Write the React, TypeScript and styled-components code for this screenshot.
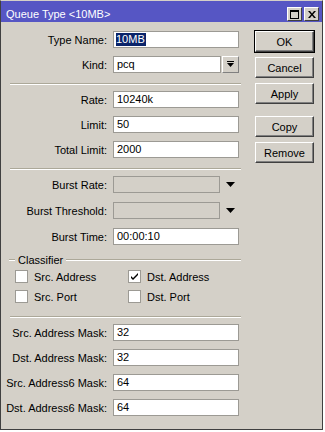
import React from "react";
import styled, { createGlobalStyle } from "styled-components";

const Global = createGlobalStyle`
  html, body { margin: 0; padding: 0; background: #ffffff; }
  body { font-family: "Liberation Sans", Arial, sans-serif; font-size: 11px; color: #000; }
  * { box-sizing: border-box; }
`;

const Window = styled.div`
  width: 323px;
  height: 430px;
  background: #d4d0c8;
  border-top: 1px solid #d4d0c8;
  border-left: 1px solid #404040;
  border-right: 1px solid #404040;
  border-bottom: 1px solid #404040;
  display: flex;
  flex-direction: column;
`;

const TitleBar = styled.div`
  height: 21px;
  background: #5656c4;
  color: #fff;
  display: flex;
  align-items: center;
  padding: 5px 3px 0 5px;
  font-size: 11px;
`;

const Title = styled.span`
  flex: 1;
`;

const TitleButtons = styled.div`
  display: flex;
  gap: 2px;
`;

const TitleButton = styled.div`
  width: 15px;
  height: 14px;
  background: #d4d0c8;
  border-top: 1px solid #fff;
  border-left: 1px solid #fff;
  border-right: 1px solid #404040;
  border-bottom: 1px solid #404040;
  display: flex;
  align-items: center;
  justify-content: center;
`;

const Body = styled.div`
  display: flex;
  padding-top: 9px;
`;

const Form = styled.div`
  width: 246px;
  display: flex;
  flex-direction: column;
`;

const Section = styled.div<{ $gap: number }>`
  display: flex;
  flex-direction: column;
  gap: ${(p) => p.$gap}px;
`;

const Row = styled.div`
  display: grid;
  grid-template-columns: 106px 126px;
  column-gap: 6px;
  align-items: center;
  height: 17px;
`;

const Label = styled.label`
  text-align: right;
  white-space: nowrap;
`;

const Field = styled.div`
  display: flex;
  align-items: center;
  gap: 1px;
  height: 17px;
`;

const Input = styled.div<{ $disabled?: boolean; $w?: number }>`
  width: ${(p) => (p.$w ? `${p.$w}px` : "100%")};
  height: 17px;
  background: ${(p) => (p.$disabled ? "#d4d0c8" : "#fff")};
  border: 1px solid #9c9a94;
  padding: 0 3px;
  display: flex;
  align-items: center;
  line-height: 13px;
  white-space: nowrap;
`;

const Selected = styled.span`
  background: #0a246a;
  color: #fff;
  padding: 0 1px 0 0;
  margin-left: -1px;
`;

const DropButton = styled.div`
  width: 17px;
  height: 17px;
  background: #d4d0c8;
  border-top: 1px solid #fff;
  border-left: 1px solid #fff;
  border-right: 1px solid #808080;
  border-bottom: 1px solid #808080;
  display: flex;
  align-items: center;
  justify-content: center;
`;

const Arrow = styled.div`
  width: 17px;
  display: flex;
  justify-content: center;
  margin-left: 1px;
`;

const Separator = styled.div<{ $top: number; $bottom: number }>`
  margin: ${(p) => p.$top}px 6px ${(p) => p.$bottom}px 9px;
  height: 2px;
  border-top: 1px solid #aca899;
  border-bottom: 1px solid #fff;
`;

const GroupHeader = styled.div`
  margin: 8px 6px 0 8px;
  height: 13px;
  display: flex;
  align-items: center;
  gap: 3px;
`;

const GroupLine = styled.div<{ $grow?: boolean }>`
  height: 2px;
  border-top: 1px solid #aca899;
  border-bottom: 1px solid #fff;
  width: 6px;
  flex: ${(p) => (p.$grow ? 1 : "none")};
`;

const CheckGrid = styled.div`
  margin: 4px 0 0 14px;
  display: grid;
  grid-template-columns: 113px 110px;
  row-gap: 7px;
`;

const CheckItem = styled.div`
  display: flex;
  align-items: center;
  gap: 6px;
  height: 13px;
`;

const Box = styled.div`
  width: 13px;
  height: 13px;
  background: #fff;
  border: 1px solid #9c9a94;
  display: flex;
  align-items: center;
  justify-content: center;
`;

const Buttons = styled.div`
  display: flex;
  flex-direction: column;
  padding-left: 8px;
  gap: 5px;
`;

const Button = styled.div<{ $default?: boolean; $space?: number }>`
  width: 59px;
  height: 21px;
  margin-top: ${(p) => p.$space ?? 0}px;
  background: #d4d0c8;
  display: flex;
  align-items: center;
  justify-content: center;
  border-top: 1px solid #fff;
  border-left: 1px solid #fff;
  border-right: 1px solid #404040;
  border-bottom: 1px solid #404040;
  box-shadow: ${(p) =>
    p.$default ? "0 0 0 1px #000, inset -1px -1px 0 #808080" : "inset -1px -1px 0 #808080"};
`;

const MaxIcon = () => (
  <svg width="9" height="9" viewBox="0 0 9 9">
    <rect x="0.5" y="0.5" width="8" height="8" fill="none" stroke="#000" />
    <rect x="0" y="0" width="9" height="2" fill="#000" />
  </svg>
);

const CloseIcon = () => (
  <svg width="8" height="7" viewBox="0 0 8 7">
    <path d="M0 0h2l2 2.5L6 0h2L5 3.5 8 7H6L4 4.5 2 7H0l3-3.5z" fill="#000" />
  </svg>
);

const DropIcon = () => (
  <svg width="7" height="7" viewBox="0 0 7 7">
    <rect x="0" y="0" width="7" height="1" fill="#000" />
    <path d="M0 2h7L3.5 6z" fill="#000" />
  </svg>
);

const TriIcon = () => (
  <svg width="9" height="5" viewBox="0 0 9 5">
    <path d="M0 0h9L4.5 5z" fill="#000" />
  </svg>
);

const Check = () => (
  <svg width="9" height="9" viewBox="0 0 9 9">
    <path d="M1 4l2 2 5-5v2L3 8 1 6z" fill="#000" />
  </svg>
);

const TextRow = ({ label, value }: { label: string; value: string }) => (
  <Row>
    <Label>{label}</Label>
    <Input>{value}</Input>
  </Row>
);

const BurstRow = ({ label }: { label: string }) => (
  <Row>
    <Label>{label}</Label>
    <Field>
      <Input $disabled $w={108} />
      <Arrow>
        <TriIcon />
      </Arrow>
    </Field>
  </Row>
);

const CheckBox = ({ label, checked }: { label: string; checked?: boolean }) => (
  <CheckItem>
    <Box>{checked && <Check />}</Box>
    <span>{label}</span>
  </CheckItem>
);

export default function App() {
  return (
    <>
      <Global />
      <Window>
        <TitleBar>
          <Title>Queue Type &lt;10MB&gt;</Title>
          <TitleButtons>
            <TitleButton>
              <MaxIcon />
            </TitleButton>
            <TitleButton>
              <CloseIcon />
            </TitleButton>
          </TitleButtons>
        </TitleBar>
        <Body>
          <Form>
            <Section $gap={8}>
              <Row>
                <Label>Type Name:</Label>
                <Input>
                  <Selected>10MB</Selected>
                </Input>
              </Row>
              <Row>
                <Label>Kind:</Label>
                <Field>
                  <Input $w={108}>pcq</Input>
                  <DropButton>
                    <DropIcon />
                  </DropButton>
                </Field>
              </Row>
            </Section>
            <Separator $top={10} $bottom={6} />
            <Section $gap={8}>
              <TextRow label="Rate:" value="10240k" />
              <TextRow label="Limit:" value="50" />
              <TextRow label="Total Limit:" value="2000" />
            </Section>
            <Separator $top={10} $bottom={6} />
            <Section $gap={9}>
              <BurstRow label="Burst Rate:" />
              <BurstRow label="Burst Threshold:" />
              <TextRow label="Burst Time:" value="00:00:10" />
            </Section>
            <GroupHeader>
              <GroupLine />
              <span>Classifier</span>
              <GroupLine $grow />
            </GroupHeader>
            <CheckGrid>
              <CheckBox label="Src. Address" />
              <CheckBox label="Dst. Address" checked />
              <CheckBox label="Src. Port" />
              <CheckBox label="Dst. Port" />
            </CheckGrid>
            <Separator $top={13} $bottom={6} />
            <Section $gap={8}>
              <TextRow label="Src. Address Mask:" value="32" />
              <TextRow label="Dst. Address Mask:" value="32" />
              <TextRow label="Src. Address6 Mask:" value="64" />
              <TextRow label="Dst. Address6 Mask:" value="64" />
            </Section>
          </Form>
          <Buttons>
            <Button $default>OK</Button>
            <Button>Cancel</Button>
            <Button>Apply</Button>
            <Button $space={7}>Copy</Button>
            <Button>Remove</Button>
          </Buttons>
        </Body>
      </Window>
    </>
  );
}
